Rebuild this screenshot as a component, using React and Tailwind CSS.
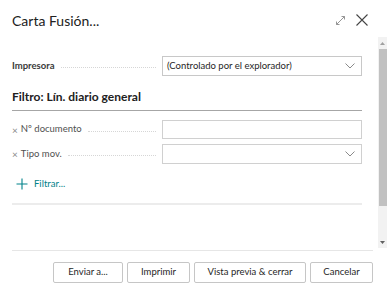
import React from "react";

const font = { fontFamily: 'Lato, "Noto Sans", sans-serif' };

function Chevron() {
  return (
    <svg width="10" height="6" viewBox="0 0 10 6" className="text-[#8a8a8a]">
      <path d="M0.5 0.5 L5 5 L9.5 0.5" fill="none" stroke="currentColor" strokeWidth="1" />
    </svg>
  );
}

function Leader() {
  return <div className="flex-1 mx-[6px] h-0 border-b border-dotted border-[#d6d6d6] mt-[3px]" />;
}

function Label({ children, x }) {
  return (
    <div className="flex items-center w-[150px] shrink-0">
      {x && <span className="text-[10px] text-[#8a8a8a] mr-[3px] leading-none">×</span>}
      <span className={x ? "text-[9.5px] text-[#505050] whitespace-nowrap" : "text-[9.5px] font-bold text-[#3a3a3a] whitespace-nowrap"}>{children}</span>
      <Leader />
    </div>
  );
}

function Btn({ w, children }) {
  return (
    <button className={`${w} h-[21px] border border-[#c6c6c6] rounded-[2px] bg-white text-[9.5px] text-[#262626]`}>
      {children}
    </button>
  );
}

export default function App() {
  return (
    <div className="w-[387px] h-[293px] bg-white flex flex-col overflow-hidden" style={font}>
      <div className="h-[37px] shrink-0 flex items-start pl-3 pr-[19px] pt-[10px]">
        <div className="flex-1 text-[14px] text-[#212121] leading-[22px]">Carta Fusión...</div>
        <div className="flex items-center gap-[10px] pt-[4px]">
          <svg width="11" height="11" viewBox="0 0 11 11" className="text-[#8a8a8a]">
            <path d="M1.5 9.5 L9.5 1.5 M1.5 9.5 L1.5 6.5 M1.5 9.5 L4.5 9.5 M9.5 1.5 L6.5 1.5 M9.5 1.5 L9.5 4.5" fill="none" stroke="currentColor" strokeWidth="0.9" />
          </svg>
          <svg width="12" height="12" viewBox="0 0 12 12" className="text-[#444]">
            <path d="M0.5 0.5 L11.5 11.5 M11.5 0.5 L0.5 11.5" fill="none" stroke="currentColor" strokeWidth="1.1" />
          </svg>
        </div>
      </div>
      <div className="h-[211px] shrink-0 flex">
        <div className="flex-1 pl-3 pr-[16px] flex flex-col">
          <div className="mt-[19px] flex items-center">
            <Label>Impresora</Label>
            <div className="flex-1 h-[20px] border border-[#c8c8c8] flex items-center justify-between pl-[4px] pr-[6px]">
              <span className="text-[9.5px] text-[#262626] whitespace-nowrap">(Controlado por el explorador)</span>
              <Chevron />
            </div>
          </div>
          <div className="mt-[12px] text-[12px] font-bold text-[#212121] leading-[18px] pb-[4px] border-b border-[#a6a6a6]">
            Filtro: Lín. diario general
          </div>
          <div className="mt-[9px] flex items-center">
            <Label x>Nº documento</Label>
            <div className="flex-1 h-[19px] border border-[#d0d0d0]" />
          </div>
          <div className="mt-[5px] flex items-center">
            <Label x>Tipo mov.</Label>
            <div className="flex-1 h-[20px] border border-[#d0d0d0] flex items-center justify-end pr-[6px]">
              <Chevron />
            </div>
          </div>
          <div className="mt-[13px] flex items-center pl-[4px] gap-[6px] text-[#00828a]">
            <svg width="12" height="12" viewBox="0 0 12 12">
              <path d="M6 0.5 V11.5 M0.5 6 H11.5" fill="none" stroke="currentColor" strokeWidth="1.1" />
            </svg>
            <span className="text-[9.5px]">Filtrar...</span>
          </div>
          <div className="mt-[12px] h-[2px] bg-[#ececec]" />
        </div>
        <div className="w-[9px] shrink-0 bg-[#f2f2f2] flex flex-col items-center">
          <div className="h-[12px] flex items-center justify-center">
            <svg width="5" height="3" viewBox="0 0 5 3"><path d="M0 3 L2.5 0 L5 3 Z" fill="#a0a0a0" /></svg>
          </div>
          <div className="w-[8px] h-[157px] bg-[#c1c1c1]" />
          <div className="flex-1" />
          <div className="h-[12px] flex items-center justify-center">
            <svg width="5" height="3" viewBox="0 0 5 3"><path d="M0 0 L2.5 3 L5 0 Z" fill="#606060" /></svg>
          </div>
        </div>
      </div>
      <div className="mx-3 mt-[2px] mr-[14px] border-t border-[#e6e6e6]" />
      <div className="flex justify-end gap-[4px] pr-[14px] pt-[11px]">
        <Btn w="w-[70px]">Enviar a...</Btn>
        <Btn w="w-[63px]">Imprimir</Btn>
        <Btn w="w-[112px]">Vista previa &amp; cerrar</Btn>
        <Btn w="w-[63px]">Cancelar</Btn>
      </div>
    </div>
  );
}
